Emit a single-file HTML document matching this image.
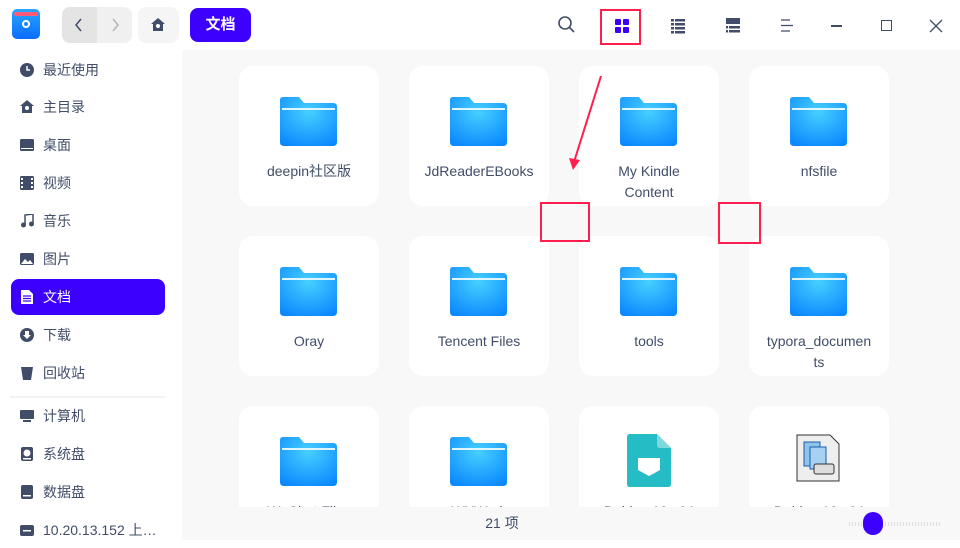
<!DOCTYPE html>
<html><head><meta charset="utf-8"><style>
*{margin:0;padding:0;box-sizing:border-box}
body{width:960px;height:540px;overflow:hidden;background:#fff;font-family:"Liberation Sans","Noto Sans CJK SC",sans-serif;position:relative;color:#414d68}
.abs{position:absolute}
.side{left:0;top:50px;width:182px;height:490px;background:#fff}
.main{left:182px;top:50px;width:778px;height:457px;background:#f8f8f8;overflow:hidden}
.status{left:182px;top:507px;width:778px;height:33px;background:#f8f8f8}
.item{position:absolute;left:11px;width:154px;height:36px;font-size:14px;line-height:36px;padding-left:32px;color:#414d68}
.item .ic{position:absolute;left:9px;top:11px;width:14px;height:14px}
.sel{background:#3c00ff;color:#fff;border-radius:8px}
.card{position:absolute;width:140px;height:140px;background:#fff;border-radius:14px;text-align:center;font-size:14px;line-height:21px;color:#414d68}
.fold{position:absolute;left:41px;top:31px;width:57px;height:49px}
.lbl{position:absolute;left:18px;right:18px;top:95px}
.red{position:absolute;border:2px solid #ff1f4f}
</style></head><body>
<div class="abs" style="left:12px;top:9px;width:28px;height:30px;border-radius:5px;background:linear-gradient(#2aa7ff,#0a6cff)"></div>
<div class="abs" style="left:14px;top:12px;width:24px;height:4px;background:#ff5a7a;border-radius:2px"></div>
<div class="abs" style="left:22px;top:20px;width:8px;height:8px;border:2px solid #fff;border-radius:50%"></div>
<div class="abs" style="left:62px;top:7px;width:70px;height:36px;border-radius:8px;background:#f0f0f0"></div>
<div class="abs" style="left:62px;top:7px;width:35px;height:36px;border-radius:8px 0 0 8px;background:#e4e4e4"></div>
<svg class="abs" style="left:72px;top:15px" width="14" height="20"><path d="M9 4 L4 10 L9 16" stroke="#414d68" stroke-width="1.5" fill="none"/></svg>
<svg class="abs" style="left:108px;top:15px" width="14" height="20"><path d="M5 4 L10 10 L5 16" stroke="#b0b4bc" stroke-width="1.5" fill="none"/></svg>
<div class="abs" style="left:138px;top:7px;width:41px;height:36px;border-radius:8px;background:#f5f5f5"></div>
<svg class="abs" style="left:150px;top:17px" width="16" height="16"><path d="M1 7 L8 1 L15 7 L13 7 L13 14 L3 14 L3 7Z" fill="#414d68"/><circle cx="8" cy="9" r="2" fill="#fff"/></svg>
<div class="abs" style="left:190px;top:8px;width:61px;height:34px;border-radius:8px;background:#3c00ff;color:#fff;font-size:15px;font-weight:bold;line-height:34px;text-align:center">文档</div>
<svg class="abs" style="left:557px;top:15px" width="20" height="20"><circle cx="8" cy="8" r="6" stroke="#414d68" stroke-width="1.6" fill="none"/><path d="M12.5 12.5 L17 17" stroke="#414d68" stroke-width="1.6"/></svg>
<div class="red" style="left:600px;top:9px;width:41px;height:36px"></div>
<svg class="abs" style="left:614px;top:18px" width="16" height="16"><rect x="1" y="1" width="6" height="6" rx="1" fill="#3c00ff"/><rect x="9" y="1" width="6" height="6" rx="1" fill="#3c00ff"/><rect x="1" y="9" width="6" height="6" rx="1" fill="#3c00ff"/><rect x="9" y="9" width="6" height="6" rx="1" fill="#3c00ff"/></svg>
<svg class="abs" style="left:670px;top:18px" width="16" height="16"><g fill="#414d68"><rect x="1" y="1" width="3" height="2.5"/><rect x="5" y="1" width="10" height="2.5"/><rect x="1" y="5" width="3" height="2.5"/><rect x="5" y="5" width="10" height="2.5"/><rect x="1" y="9" width="3" height="2.5"/><rect x="5" y="9" width="10" height="2.5"/><rect x="1" y="13" width="3" height="2.5"/><rect x="5" y="13" width="10" height="2.5"/></g></svg>
<svg class="abs" style="left:725px;top:17px" width="16" height="16"><g fill="#414d68"><rect x="1" y="1" width="14" height="6"/><rect x="1" y="9" width="2" height="2.5"/><rect x="4" y="9" width="11" height="2.5"/><rect x="1" y="13" width="2" height="2.5"/><rect x="4" y="13" width="11" height="2.5"/></g></svg>
<svg class="abs" style="left:780px;top:18px" width="14" height="16"><g stroke="#414d68" stroke-width="1.2"><path d="M1 2 H10 M1 7.5 H13 M1 13 H10"/></g></svg>
<div class="abs" style="left:831px;top:25px;width:11px;height:1.5px;background:#414d68"></div>
<div class="abs" style="left:881px;top:20px;width:11px;height:11px;border:1.5px solid #414d68"></div>
<svg class="abs" style="left:929px;top:19px" width="14" height="14"><path d="M1 1 L13 13 M13 1 L1 13" stroke="#414d68" stroke-width="1.3"/></svg>

<div class="abs side">
<div class="item" style="top:2px"><svg class="ic" viewBox="0 0 14 14"><circle cx="7" cy="7" r="7" fill="#414d68"/><path d="M7 3 V7 H10" stroke="#fff" stroke-width="1.5" fill="none"/></svg>最近使用</div>
<div class="item" style="top:39px"><svg class="ic" viewBox="0 0 14 14"><path d="M0 6 L7 0 L14 6 L12 6 L12 13 L2 13 L2 6Z" fill="#414d68"/><circle cx="7" cy="8" r="2" fill="#fff"/></svg>主目录</div>
<div class="item" style="top:77px"><svg class="ic" viewBox="0 0 14 14"><rect x="0" y="1" width="14" height="12" rx="1.5" fill="#414d68"/><rect x="1" y="10" width="12" height="1" fill="#fff"/></svg>桌面</div>
<div class="item" style="top:115px"><svg class="ic" viewBox="0 0 14 14"><rect x="0" y="0" width="14" height="14" rx="1.5" fill="#414d68"/><g fill="#fff"><rect x="1" y="2" width="2" height="2"/><rect x="1" y="6" width="2" height="2"/><rect x="1" y="10" width="2" height="2"/><rect x="11" y="2" width="2" height="2"/><rect x="11" y="6" width="2" height="2"/><rect x="11" y="10" width="2" height="2"/></g></svg>视频</div>
<div class="item" style="top:153px"><svg class="ic" viewBox="0 0 14 14"><path d="M5 11 V1 L13 0 V10" stroke="#414d68" stroke-width="1.5" fill="none"/><circle cx="3.5" cy="11" r="2.5" fill="#414d68"/><circle cx="11.5" cy="10" r="2.5" fill="#414d68"/></svg>音乐</div>
<div class="item" style="top:191px"><svg class="ic" viewBox="0 0 14 14"><rect x="0" y="1" width="14" height="12" rx="1.5" fill="#414d68"/><path d="M1 12 L5 7 L8 10 L10 8 L13 12Z" fill="#fff"/></svg>图片</div>
<div class="item sel" style="top:229px"><svg class="ic" viewBox="0 0 14 14"><path d="M1 0 H9 L13 4 V14 H1Z" fill="#fff"/><g stroke="#3c00ff" stroke-width="1.2"><path d="M3 6 H11 M3 8.5 H11 M3 11 H11"/></g></svg>文档</div>
<div class="item" style="top:267px"><svg class="ic" viewBox="0 0 14 14"><circle cx="7" cy="7" r="7" fill="#414d68"/><path d="M5 3 H9 V7 H11 L7 11 L3 7 H5Z" fill="#fff"/></svg>下载</div>
<div class="item" style="top:305px"><svg class="ic" viewBox="0 0 14 14"><path d="M1 1 H13 L11 14 H3Z" fill="#414d68"/></svg>回收站</div>
<div class="abs" style="left:10px;top:346px;width:155px;height:2px;background:#f2f2f2"></div>
<div class="item" style="top:348px"><svg class="ic" viewBox="0 0 14 14"><rect x="0" y="1" width="14" height="9" rx="1" fill="#414d68"/><rect x="3" y="11" width="8" height="2" fill="#414d68"/></svg>计算机</div>
<div class="item" style="top:386px"><svg class="ic" viewBox="0 0 14 14"><rect x="1" y="0" width="12" height="14" rx="2" fill="#414d68"/><circle cx="7" cy="6" r="3.5" fill="#fff"/><rect x="3" y="11" width="8" height="1.5" fill="#fff"/></svg>系统盘</div>
<div class="item" style="top:424px"><svg class="ic" viewBox="0 0 14 14"><rect x="1" y="0" width="12" height="14" rx="2" fill="#414d68"/><rect x="3" y="10" width="8" height="1.5" fill="#fff"/></svg>数据盘</div>
<div class="item" style="top:462px"><svg class="ic" viewBox="0 0 14 14"><rect x="0" y="2" width="14" height="11" rx="2" fill="#414d68"/><rect x="3" y="7" width="8" height="1.5" fill="#fff"/></svg>10.20.13.152 上…</div>
</div>

<div class="abs main">
<svg width="0" height="0" style="position:absolute"><defs>
<radialGradient id="fg" cx="0.5" cy="0.3" r="0.8"><stop offset="0" stop-color="#46d0ff"/><stop offset="1" stop-color="#0a86ff"/></radialGradient></defs></svg>
</div>
<div class="abs" style="left:182px;top:50px;width:778px;height:457px;overflow:hidden">
<div class="card" style="left:57px;top:16px"><svg class="fold" viewBox="0 0 57 49"><path d="M3 0 H19 L24 6 H53 Q57 6 57 10 V45 Q57 49 53 49 H4 Q0 49 0 45 V3 Q0 0 3 0Z" fill="url(#fg)"/><rect x="2" y="11" width="53" height="2" fill="#dff5ff"/></svg><div class="lbl" style="left:5px;right:5px">deepin社区版</div></div>
<div class="card" style="left:227px;top:16px"><svg class="fold" viewBox="0 0 57 49"><path d="M3 0 H19 L24 6 H53 Q57 6 57 10 V45 Q57 49 53 49 H4 Q0 49 0 45 V3 Q0 0 3 0Z" fill="url(#fg)"/><rect x="2" y="11" width="53" height="2" fill="#dff5ff"/></svg><div class="lbl" style="left:5px;right:5px">JdReaderEBooks</div></div>
<div class="card" style="left:397px;top:16px"><svg class="fold" viewBox="0 0 57 49"><path d="M3 0 H19 L24 6 H53 Q57 6 57 10 V45 Q57 49 53 49 H4 Q0 49 0 45 V3 Q0 0 3 0Z" fill="url(#fg)"/><rect x="2" y="11" width="53" height="2" fill="#dff5ff"/></svg><div class="lbl">My Kindle<br>Content</div></div>
<div class="card" style="left:567px;top:16px"><svg class="fold" viewBox="0 0 57 49"><path d="M3 0 H19 L24 6 H53 Q57 6 57 10 V45 Q57 49 53 49 H4 Q0 49 0 45 V3 Q0 0 3 0Z" fill="url(#fg)"/><rect x="2" y="11" width="53" height="2" fill="#dff5ff"/></svg><div class="lbl">nfsfile</div></div>
<div class="card" style="left:57px;top:186px"><svg class="fold" viewBox="0 0 57 49"><path d="M3 0 H19 L24 6 H53 Q57 6 57 10 V45 Q57 49 53 49 H4 Q0 49 0 45 V3 Q0 0 3 0Z" fill="url(#fg)"/><rect x="2" y="11" width="53" height="2" fill="#dff5ff"/></svg><div class="lbl">Oray</div></div>
<div class="card" style="left:227px;top:186px"><svg class="fold" viewBox="0 0 57 49"><path d="M3 0 H19 L24 6 H53 Q57 6 57 10 V45 Q57 49 53 49 H4 Q0 49 0 45 V3 Q0 0 3 0Z" fill="url(#fg)"/><rect x="2" y="11" width="53" height="2" fill="#dff5ff"/></svg><div class="lbl" style="left:5px;right:5px">Tencent Files</div></div>
<div class="card" style="left:397px;top:186px"><svg class="fold" viewBox="0 0 57 49"><path d="M3 0 H19 L24 6 H53 Q57 6 57 10 V45 Q57 49 53 49 H4 Q0 49 0 45 V3 Q0 0 3 0Z" fill="url(#fg)"/><rect x="2" y="11" width="53" height="2" fill="#dff5ff"/></svg><div class="lbl">tools</div></div>
<div class="card" style="left:567px;top:186px"><svg class="fold" viewBox="0 0 57 49"><path d="M3 0 H19 L24 6 H53 Q57 6 57 10 V45 Q57 49 53 49 H4 Q0 49 0 45 V3 Q0 0 3 0Z" fill="url(#fg)"/><rect x="2" y="11" width="53" height="2" fill="#dff5ff"/></svg><div class="lbl" style="left:5px;right:5px">typora_documen<br>ts</div></div>
<div class="card" style="left:57px;top:356px"><svg class="fold" viewBox="0 0 57 49"><path d="M3 0 H19 L24 6 H53 Q57 6 57 10 V45 Q57 49 53 49 H4 Q0 49 0 45 V3 Q0 0 3 0Z" fill="url(#fg)"/><rect x="2" y="11" width="53" height="2" fill="#dff5ff"/></svg><div class="lbl" style="left:5px;right:5px">WeChat Files</div></div>
<div class="card" style="left:227px;top:356px"><svg class="fold" viewBox="0 0 57 49"><path d="M3 0 H19 L24 6 H53 Q57 6 57 10 V45 Q57 49 53 49 H4 Q0 49 0 45 V3 Q0 0 3 0Z" fill="url(#fg)"/><rect x="2" y="11" width="53" height="2" fill="#dff5ff"/></svg><div class="lbl">WXWork</div></div>
<div class="card" style="left:397px;top:356px"><svg style="position:absolute;left:48px;top:28px" width="44" height="53" viewBox="0 0 44 53"><path d="M3 0 H30 L44 14 V50 Q44 53 41 53 H3 Q0 53 0 50 V3 Q0 0 3 0Z" fill="#25bcc6"/><path d="M30 0 L44 14 H33 Q30 14 30 11Z" fill="#7fd8de"/><path d="M11 24 H33 V36 L22 42 L11 36Z" fill="#fff"/></svg><div class="lbl" style="left:5px;right:5px">Debian 10 x64</div></div>
<div class="card" style="left:567px;top:356px"><svg style="position:absolute;left:47px;top:28px" width="44" height="48" viewBox="0 0 44 48"><path d="M1 1 H34 L43 10 V47 H1Z" fill="#eee" stroke="#333"/><rect x="8" y="8" width="16" height="24" fill="#8fc3ec" stroke="#1b5ea8"/><rect x="14" y="13" width="16" height="22" fill="#a6d1f2" stroke="#1b5ea8"/><rect x="18" y="30" width="20" height="10" rx="2" fill="#ddd" stroke="#333"/></svg><div class="lbl" style="left:5px;right:5px">Debian 10 x64</div></div>
</div>

<div class="abs status"><div class="abs" style="left:0;width:640px;top:0;text-align:center;font-size:14px;line-height:33px;color:#414d68">21 项</div>
<div class="abs" style="left:667px;top:15px;width:91px;height:4px;background:repeating-linear-gradient(90deg,#ddd 0 1px,transparent 1px 3px)"></div>
<div class="abs" style="left:681px;top:5px;width:20px;height:23px;border-radius:10px;background:#3c00ff"></div>
</div>

<svg class="abs" style="left:0;top:0" width="960" height="540" pointer-events="none"><path d="M601 76 L574 162" stroke="#ff1f4f" stroke-width="2"/><path d="M569 158 L573 170 L580 160Z" fill="#ff1f4f"/></svg>
<div class="red" style="left:540px;top:202px;width:50px;height:40px"></div>
<div class="red" style="left:718px;top:202px;width:43px;height:42px"></div>
</body></html>
